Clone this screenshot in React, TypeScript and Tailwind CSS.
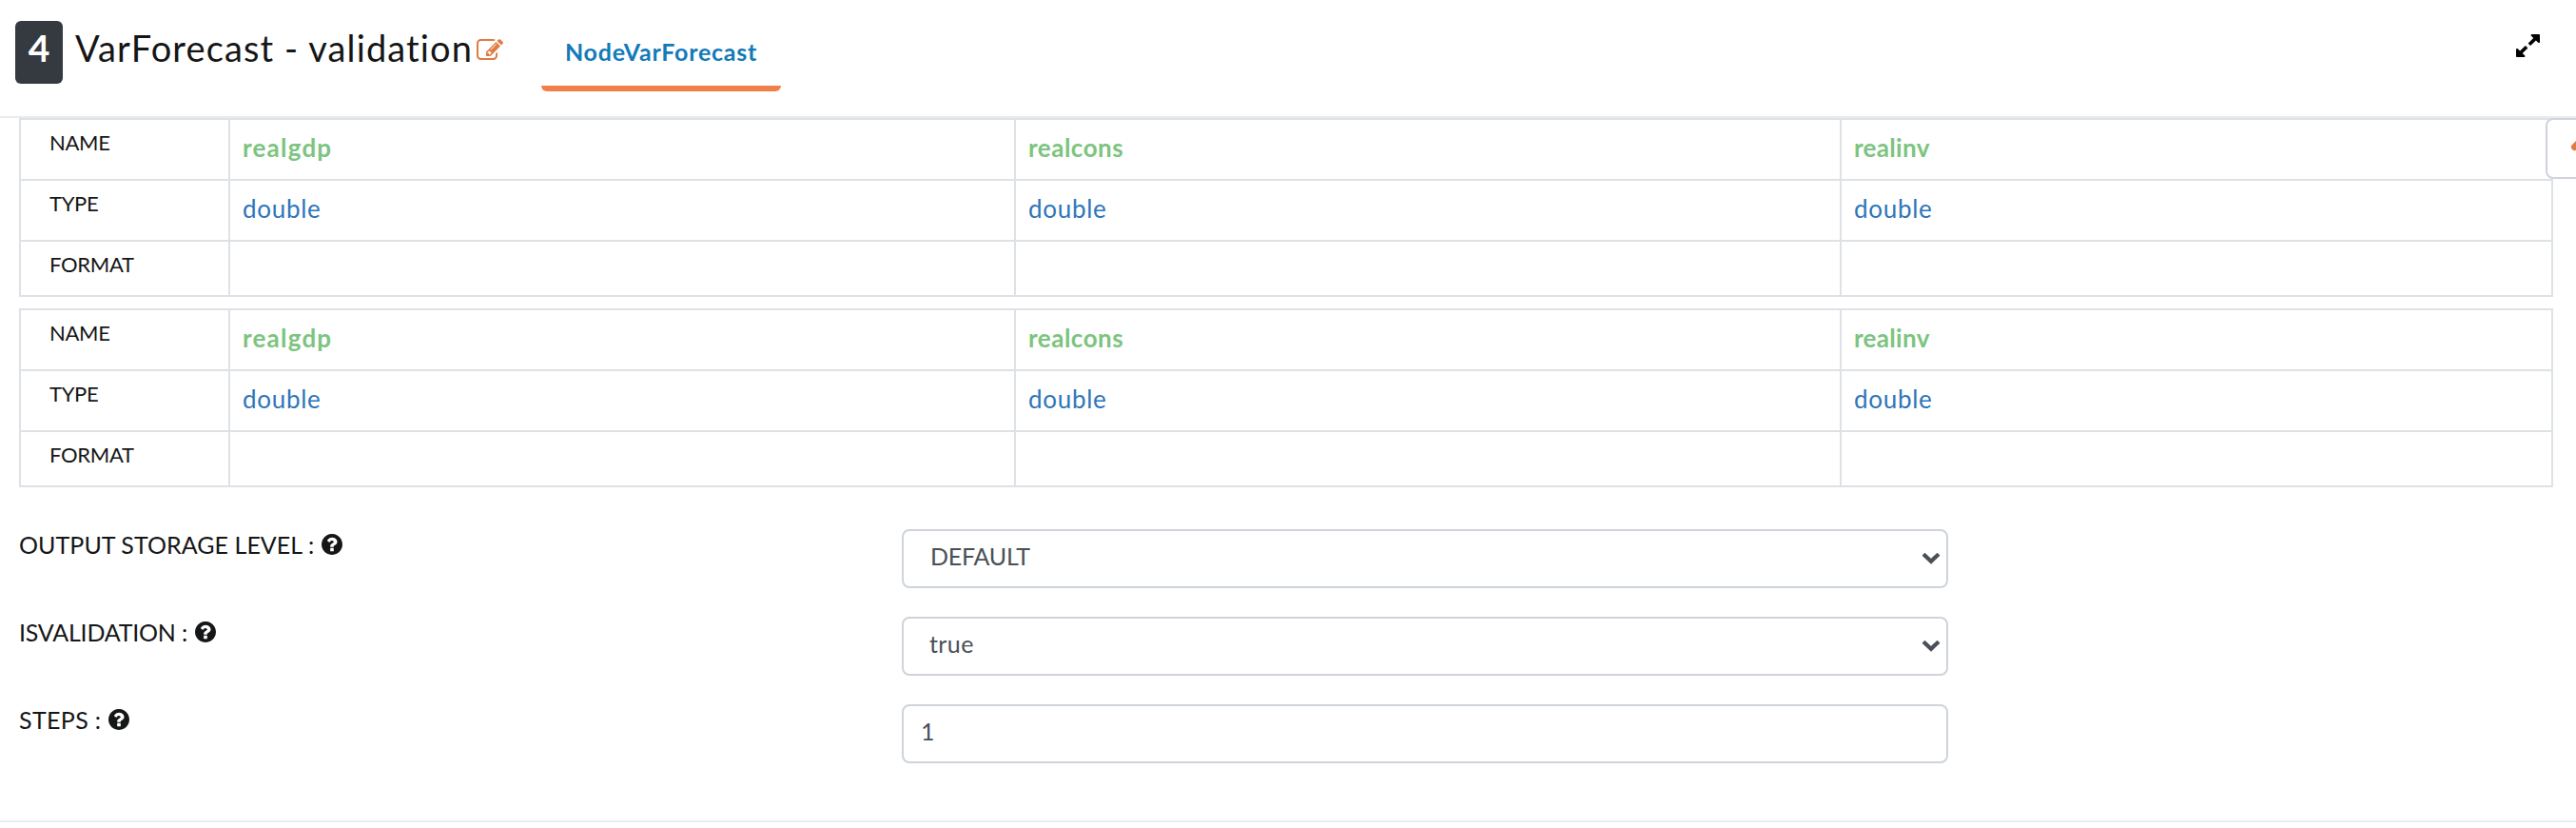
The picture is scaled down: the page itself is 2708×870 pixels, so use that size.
import React from "react";

const sans = "font-['Lato','Liberation_Sans',sans-serif]";

function EditIcon() {
  return (
    <svg viewBox="0 0 1792 1792" className="block h-7 w-7 shrink-0 fill-[#e07b43]">
      <path d="M888 1184l116-116-152-152-116 116v56h96v96h56zm440-720q-16-16-33 1l-350 350q-17 17-1 33t33-1l350-350q17-17 1-33zm80 594v190q0 119-84.5 203.5t-203.5 84.5h-832q-119 0-203.5-84.5t-84.5-203.5v-832q0-119 84.5-203.5t203.5-84.5h832q63 0 117 25 15 7 18 23 3 17-9 29l-49 49q-14 14-32 8-23-6-45-6h-832q-66 0-113 47t-47 113v832q0 66 47 113t113 47h832q66 0 113-47t47-113v-126q0-13 9-22l64-64q15-15 35-7t20 29zm-96-738l288 288-672 672h-288v-288zm444 132l-92 92-288-288 92-92q28-28 68-28t68 28l152 152q28 28 28 68t-28 68z" />
    </svg>
  );
}

function HelpIcon() {
  return (
    <svg viewBox="128 128 1536 1536" className="block h-[22px] w-[22px] shrink-0 fill-[#151617]">
      <path d="M1024 1376v-192q0-14-9-23t-23-9h-192q-14 0-23 9t-9 23v192q0 14 9 23t23 9h192q14 0 23-9t9-23zm256-672q0-88-55.5-163t-138.5-116-170-41q-243 0-371 213-15 24 8 42l132 100q7 6 19 6 16 0 25-12 53-68 86-92 34-24 86-24 48 0 85.5 26t37.5 59q0 38-20 61t-68 45q-63 28-115.5 86.5t-52.5 125.5v36q0 14 9 23t23 9h192q14 0 23-9t9-23q0-19 21.5-49.5t54.5-49.5q32-18 49-28.5t46-35 44.5-48 28-60.5 12.5-81zm384 192q0 209-103 385.5t-279.5 279.5-385.5 103-385.5-103-279.5-279.5-103-385.5 103-385.5 279.5-279.5 385.5-103 385.5 103 279.5 279.5 103 385.5z" />
    </svg>
  );
}

function ExpandIcon() {
  return (
    <svg viewBox="128 128 1536 1536" className="block h-6 w-[25px] fill-black" preserveAspectRatio="none">
      <path d="M883 1056q0 13-10 23l-332 332 144 144q19 19 19 45t-19 45-45 19h-448q-26 0-45-19t-19-45v-448q0-26 19-45t45-19 45 19l144 144 332-332q10-10 23-10t23 10l114 114q10 10 10 23zm781-864v448q0 26-19 45t-45 19-45-19l-144-144-332 332q-10 10-23 10t-23-10l-114-114q-10-10-10-23t10-23l332-332-144-144q-19-19-19-45t19-45 45-19h448q26 0 45 19t19 45z" />
    </svg>
  );
}

const columns = [
  { name: "realgdp", nameSpacing: "tracking-[1.2px]" },
  { name: "realcons", nameSpacing: "tracking-[0.5px]" },
  { name: "realinv", nameSpacing: "tracking-[0.3px]" },
];

const cell = "border-r-2 border-b-2 border-[#dee2e6]";
const heading = "border-l-2 pt-3 pl-[30px] text-[22px] tracking-[-0.3px]";

function SchemaTable() {
  return (
    <div className="grid w-[2664px] shrink-0 grid-cols-[222px_826px_868px_748px] grid-rows-[64px_64px_58px] border-t-2 border-[#dee2e6] leading-6">
      <div className={`${cell} ${heading}`}>NAME</div>
      {columns.map((c) => (
        <div key={c.name} className={`${cell} pt-[17px] pl-[13px] text-[26px] font-bold text-[#7cc47f] ${c.nameSpacing}`}>
          {c.name}
        </div>
      ))}
      <div className={`${cell} ${heading}`}>TYPE</div>
      {columns.map((c) => (
        <div key={c.name} className={`${cell} pt-[17px] pl-[13px] text-[26px] tracking-[0.7px] text-[#2e75b9]`}>
          double
        </div>
      ))}
      <div className={`${cell} ${heading}`}>FORMAT</div>
      {columns.map((c) => (
        <div key={c.name} className={cell} />
      ))}
    </div>
  );
}

function Field({ label, spacing, children }: { label: string; spacing: string; children: React.ReactNode }) {
  return (
    <div className="flex h-[62px] items-start">
      <div className="flex w-[928px] items-center gap-2 pt-1">
        <span className={`text-[25px] leading-6 whitespace-nowrap ${spacing}`}>{label}</span>
        <HelpIcon />
      </div>
      <div className="flex h-[62px] w-[1100px] items-center justify-between rounded-lg border-2 border-[#ced4da] text-[25px] leading-6 text-[#495057]">
        {children}
      </div>
    </div>
  );
}

function Chevron() {
  return (
    <svg viewBox="0 0 20 13" className="mr-[6px] mb-[2px] h-[13px] w-5 fill-none stroke-[#495057] stroke-[4.2]">
      <path d="M2 2.2L10 9.8L18 2.2" />
    </svg>
  );
}

export default function App() {
  return (
    <div className={`${sans} flex h-[870px] w-[2708px] flex-col overflow-hidden bg-white text-[#151617]`}>
      <header className="flex h-[124px] shrink-0 items-start border-b-2 border-[#e9ecef] pl-4">
        <div className="mt-[22px] flex h-[66px] w-[50px] shrink-0 justify-center rounded-md bg-[#343a40] pt-2 text-[39px] leading-[40px] font-bold text-white">
          4
        </div>
        <h1 className="mt-[30px] ml-[13px] w-[422px] shrink-0 text-[38px] leading-[40px] tracking-[1.12px] whitespace-nowrap">
          VarForecast - validation
        </h1>
        <div className="mt-[39px] shrink-0">
          <EditIcon />
        </div>
        <div className="mt-4 ml-10 flex h-20 w-[252px] shrink-0 justify-center rounded-b-md border-b-[6px] border-[#f27f47] pt-[26px] text-[25px] leading-6 font-bold tracking-[0.75px] text-[#137ab8]">
          NodeVarForecast
        </div>
        <div className="mt-9 mr-[38px] ml-auto">
          <ExpandIcon />
        </div>
      </header>
      <main className="relative flex h-[740px] shrink-0 flex-col border-b-2 border-[#e9ecef] pl-5">
        <SchemaTable />
        <div className="h-3 shrink-0" />
        <SchemaTable />
        <div className="mt-11 flex flex-col gap-[30px]">
          <Field label="OUTPUT STORAGE LEVEL :" spacing="tracking-[0.05px]">
            <span className="pb-[6px] pl-[28px] tracking-[-0.2px]">DEFAULT</span>
            <Chevron />
          </Field>
          <Field label="ISVALIDATION :" spacing="tracking-[-0.2px]">
            <span className="pb-[6px] pl-[27px] tracking-[0.4px]">true</span>
            <Chevron />
          </Field>
          <Field label="STEPS :" spacing="tracking-[0.35px]">
            <span className="pb-[6px] pl-[18px]">1</span>
          </Field>
        </div>
        <div className="absolute top-0 left-[2676px] h-16 w-16 overflow-hidden rounded-lg border-2 border-[#ced4da] bg-white">
          <svg viewBox="0 0 30 30" className="mt-3 ml-6 h-[30px] w-[30px] fill-none stroke-[#e07b43] stroke-[7]" strokeLinecap="round">
            <path d="M4.5 16.5L15 6L25 16" />
          </svg>
        </div>
      </main>
    </div>
  );
}
